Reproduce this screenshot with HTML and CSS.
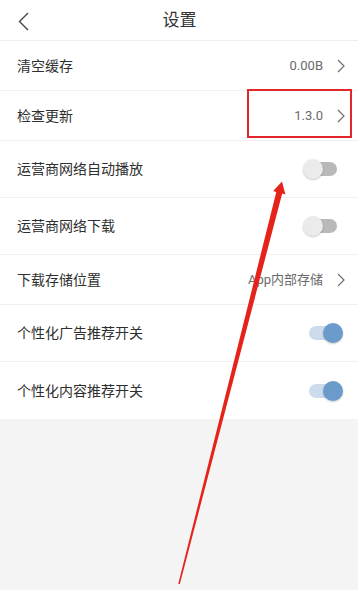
FILE: index.html
```html
<!DOCTYPE html>
<html lang="zh">
<head>
<meta charset="utf-8">
<title>设置</title>
<link rel="stylesheet" href="styles.css">
</head>
<body>
<div class="page">
  <header class="topbar">
    <span class="back">
      <svg width="11" height="19" viewBox="0 0 11 19"><path d="M10 1 L1.5 9.5 L10 18" fill="none" stroke="#444" stroke-width="1.4"/></svg>
    </span>
    <h1 class="title">设置</h1>
    <span></span>
  </header>
  <ul class="list">
    <li class="row row-link first">
      <span class="label">清空缓存</span>
      <span class="value">0.00B</span>
      <svg class="chev" width="8" height="14" viewBox="0 0 8 14"><path d="M1 1 L7 7 L1 13" fill="none" stroke="#707070" stroke-width="1.2"/></svg>
    </li>
    <li class="row row-link">
      <span class="label">检查更新</span>
      <span class="value">1.3.0</span>
      <svg class="chev" width="8" height="14" viewBox="0 0 8 14"><path d="M1 1 L7 7 L1 13" fill="none" stroke="#707070" stroke-width="1.2"/></svg>
    </li>
    <li class="row row-switch">
      <span class="label">运营商网络自动播放</span>
      <span class="switch"><span class="track"></span><span class="knob"></span></span>
    </li>
    <li class="row row-switch">
      <span class="label">运营商网络下载</span>
      <span class="switch"><span class="track"></span><span class="knob"></span></span>
    </li>
    <li class="row row-link">
      <span class="label">下载存储位置</span>
      <span class="value">App内部存储</span>
      <svg class="chev" width="8" height="14" viewBox="0 0 8 14"><path d="M1 1 L7 7 L1 13" fill="none" stroke="#707070" stroke-width="1.2"/></svg>
    </li>
    <li class="row row-switch">
      <span class="label">个性化广告推荐开关</span>
      <span class="switch on"><span class="track"></span><span class="knob"></span></span>
    </li>
    <li class="row row-switch last">
      <span class="label">个性化内容推荐开关</span>
      <span class="switch on"><span class="track"></span><span class="knob"></span></span>
    </li>
  </ul>
  <div class="highlight"></div>
  <svg class="arrow" width="358" height="590" viewBox="0 0 358 590">
    <polygon points="178.3,583.8 276.3,192.0 273.2,191.1 282,181.5 285.4,194.4 282.2,193.5 179.8,584.2" fill="#e5231b"/>
  </svg>
</div>
</body>
</html>
```

FILE: styles.css
```css
html, body {
  margin: 0;
  padding: 0;
  background: #f4f4f4;
}

.page {
  position: relative;
  width: 358px;
  height: 590px;
  overflow: hidden;
  font-family: Roboto, "Noto Sans CJK SC", sans-serif;
  color: #333;
}

.topbar {
  display: grid;
  grid-template-columns: 1fr auto 1fr;
  align-items: center;
  height: 40px;
  background: #fff;
  border-bottom: 1px solid #eeeeee;
}

.back {
  display: flex;
  align-items: center;
  padding-left: 18px;
  padding-top: 2px;
}

.title {
  margin: 0;
  font-size: 17px;
  font-weight: normal;
  line-height: 24px;
  color: #333;
  padding-left: 1px;
}

.list {
  list-style: none;
  margin: 0;
  padding: 0;
  background: #fff;
}

.row {
  display: flex;
  align-items: center;
  padding: 0 13px 0 17px;
  border-bottom: 1px solid #f0f0f0;
}

.row.last {
  border-bottom: none;
}

.row-link {
  height: 49px;
}

.row-link.first {
  height: 48px;
  padding-top: 1px;
}

.row-switch {
  height: 56px;
}

.row.last {
  height: 57px;
}

.label {
  flex: 1;
  font-size: 14px;
  line-height: 20px;
  color: #2e2e2e;
}

.value {
  font-size: 13px;
  line-height: 18px;
  color: #6a6a6a;
  margin-right: 14px;
}

.chev {
  display: block;
}

.switch {
  position: relative;
  width: 40px;
  height: 20px;
  margin-right: 2px;
}

.track {
  position: absolute;
  left: 9px;
  top: 3px;
  width: 25px;
  height: 14px;
  border-radius: 7px;
  background: #b9b9b9;
}

.knob {
  position: absolute;
  left: 0;
  top: 0;
  width: 20px;
  height: 20px;
  border-radius: 50%;
  background: #ebebeb;
  box-shadow: 0 1px 2px rgba(0, 0, 0, 0.22);
}

.switch.on .track {
  left: 6px;
  background: #cddcec;
}

.switch.on .knob {
  left: 20px;
  background: #6b9bcb;
}

.highlight {
  position: absolute;
  left: 247px;
  top: 89px;
  width: 101px;
  height: 45px;
  border: 2px solid #e3262b;
}

.arrow {
  position: absolute;
  left: 0;
  top: 0;
  pointer-events: none;
}
```
